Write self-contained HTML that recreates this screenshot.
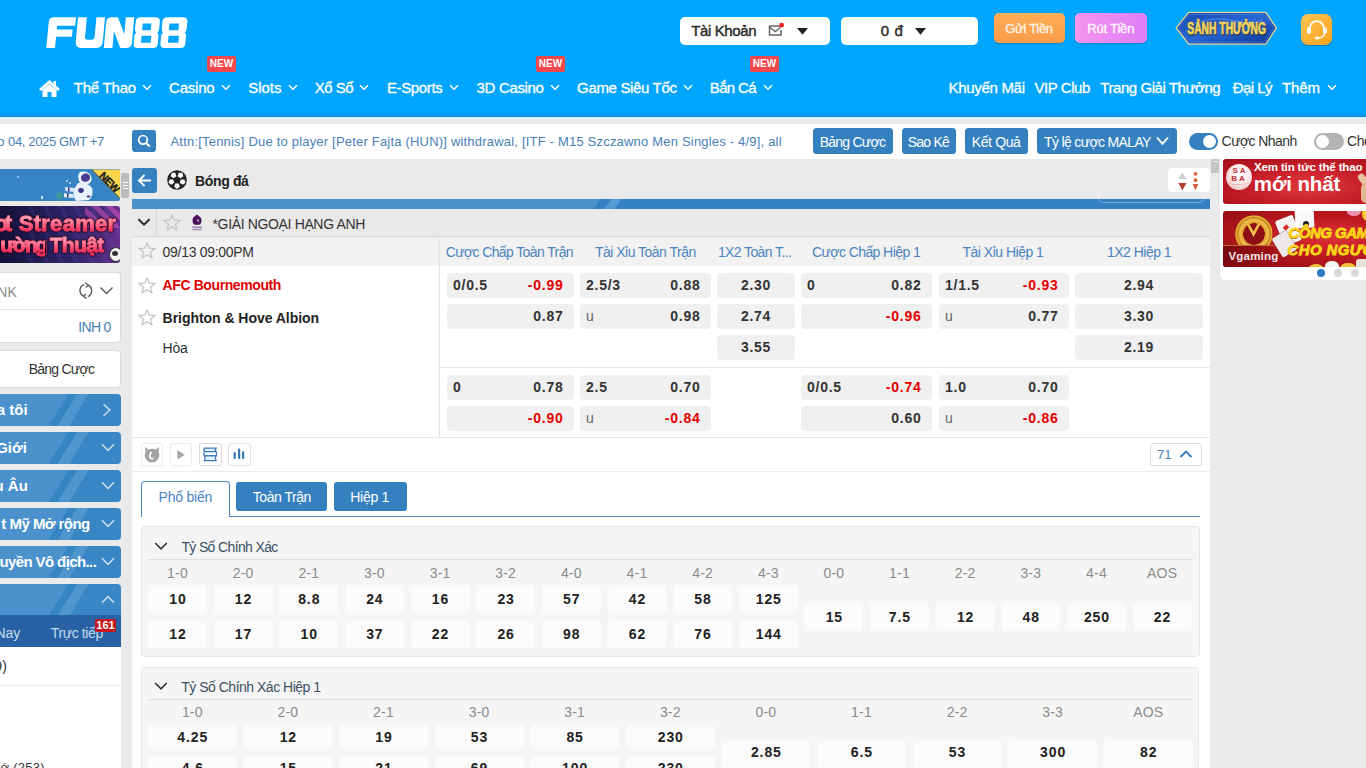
<!DOCTYPE html>
<html><head><meta charset="utf-8">
<style>
*{margin:0;padding:0;box-sizing:border-box}
html,body{width:1366px;height:768px;overflow:hidden;background:#eaeaea;font-family:"Liberation Sans",sans-serif;position:relative}
.a{position:absolute}
#hdr{left:0;top:0;width:1366px;height:117px;background:linear-gradient(#00a5fe 0,#00a5fe 112px,#1590e6 116px,#1a86d6 117px)}
#hdrline{left:0;top:117px;width:1366px;height:2px;background:linear-gradient(#c4f6ff,#e4ecf8)}
.nav{color:#fff;font-size:15px;top:79px;white-space:nowrap;line-height:17px;-webkit-text-stroke:0.3px #fff}
.chev{display:inline-block;width:7px;height:7px;border-right:1.6px solid #fff;border-bottom:1.6px solid #fff;transform:rotate(45deg);margin-left:7px;position:relative;top:-4px}
.new{background:#f2474b;color:#fff;font-size:10px;font-weight:bold;width:29px;height:15.5px;line-height:15.5px;text-align:center;border-radius:2px;top:56.3px}
.hbox{background:#fff;border-radius:5px;top:17px;height:28px}
.btn{border-radius:5px;color:#fff;font-size:13px;text-align:center;line-height:30px;top:13px;height:30px}
#tick{left:0;top:124px;width:1366px;height:35px;background:#fff}
.tb{background:#3581c0;border-radius:3.5px;top:128.3px;height:25.5px}
.sbi{position:absolute;left:0;width:121px;height:31.5px;background:linear-gradient(121.5deg,#4b92cd 0,#4b92cd 48.6%,#3585c3 48.6%,#3585c3 54.9%,#4f96cf 54.9%,#4f96cf 63%,#3886c4 63%)}
.sbt{position:absolute;left:-1px;top:7px;font-size:14px;font-weight:bold;color:#fff;white-space:nowrap}
.cell{position:absolute;background:#f0f0f0;border-radius:4px;height:25px;font-size:14px;font-weight:bold;color:#333;line-height:25px;letter-spacing:0.75px}
.cl{position:absolute;left:6px;top:0}
.cr{position:absolute;right:10.5px;top:0}
.cc{text-align:center}
.red{color:#e50000}
.ul{font-weight:normal;color:#666}
.th{position:absolute;top:244px;font-size:14px;color:#4b84bf;white-space:nowrap}
.lab{position:absolute;font-size:14px;color:#8c8c8c;text-align:center;width:59px;letter-spacing:0.2px}
.sc{position:absolute;background:#fbfbfb;border-radius:4px;font-size:14px;font-weight:bold;color:#222;text-align:center;width:59px;height:28px;line-height:28px;letter-spacing:0.9px;text-indent:0.9px}
</style></head><body>
<div id="hdr" class="a"></div>
<div id="hdrline" class="a"></div>
<!-- logo -->
<svg class="a" style="left:40px;top:10px" width="155" height="45" viewBox="0 0 1366 397"><g transform="translate(31,0) skewX(-5.3)" fill="#fff" fill-rule="evenodd">
<path d="M55,335 V110 Q55,65 100,65 H292 V140 H132 V172 H272 V235 H132 V335 Z"></path>
<path d="M310,65 H388 V238 Q388,262 412,262 H450 Q472,262 472,238 V65 H548 V280 Q548,335 493,335 H365 Q310,335 310,280 Z"></path>
<path d="M562,335 V108 Q562,65 605,65 H662 L732,212 V65 H806 V292 Q806,335 763,335 H708 L638,188 V335 Z"></path>
<path d="M862,65 H995 Q1035,65 1035,105 V168 Q1035,192 1021,200 Q1035,208 1035,232 V295 Q1035,335 995,335 H862 Q822,335 822,295 V232 Q822,208 836,200 Q822,192 822,168 V105 Q822,65 862,65 Z M886,120 V178 H962 V120 Z M886,228 V290 H972 V228 Z"></path>
<path d="M1098,65 H1238 Q1278,65 1278,105 V168 Q1278,192 1264,200 Q1278,208 1278,232 V295 Q1278,335 1238,335 H1098 Q1058,335 1058,295 V232 Q1058,208 1072,200 Q1058,192 1058,168 V105 Q1058,65 1098,65 Z M1122,120 V178 H1206 V120 Z M1124,228 V290 H1216 V228 Z"></path>
</g></svg>
<!-- nav -->
<svg class="a" style="left:38px;top:79px" width="23" height="18" viewBox="0 0 23 18"><path d="M11.5 1 L1 10 L3 12 L11.5 4.5 L20 12 L22 10 L18 6.6 V2 H15.5 V4.4 Z M4.5 11 V18 H9.5 V13 H13.5 V18 H18.5 V11 L11.5 5 Z" fill="#fff"></path></svg>
<div class="a nav fit" style="left: 73.8px; --tw: 62.3px; letter-spacing: -0.234px;">Thể Thao</div>
<svg class="a" style="left:142.0px;top:84px" width="10" height="7" viewBox="0 0 10 7"><path d="M1 1.2 L5 5.2 L9 1.2" fill="none" stroke="#fff" stroke-width="1.5"></path></svg>
<div class="a nav fit" style="left: 169.1px; --tw: 45.5px; letter-spacing: -0.241px;">Casino</div>
<svg class="a" style="left:221.1px;top:84px" width="10" height="7" viewBox="0 0 10 7"><path d="M1 1.2 L5 5.2 L9 1.2" fill="none" stroke="#fff" stroke-width="1.5"></path></svg>
<div class="a nav fit" style="left: 248.3px; --tw: 33.1px; letter-spacing: -0.065px;">Slots</div>
<svg class="a" style="left:287.9px;top:84px" width="10" height="7" viewBox="0 0 10 7"><path d="M1 1.2 L5 5.2 L9 1.2" fill="none" stroke="#fff" stroke-width="1.5"></path></svg>
<div class="a nav fit" style="left: 314.8px; --tw: 38.7px; letter-spacing: -0.544px;">Xổ Số</div>
<svg class="a" style="left:359.3px;top:84px" width="10" height="7" viewBox="0 0 10 7"><path d="M1 1.2 L5 5.2 L9 1.2" fill="none" stroke="#fff" stroke-width="1.5"></path></svg>
<div class="a nav fit" style="left: 386.9px; --tw: 55.9px; letter-spacing: -0.351px;">E-Sports</div>
<svg class="a" style="left:449.3px;top:84px" width="10" height="7" viewBox="0 0 10 7"><path d="M1 1.2 L5 5.2 L9 1.2" fill="none" stroke="#fff" stroke-width="1.5"></path></svg>
<div class="a nav fit" style="left: 476.6px; --tw: 67.3px; letter-spacing: -0.343px;">3D Casino</div>
<svg class="a" style="left:549.5px;top:84px" width="10" height="7" viewBox="0 0 10 7"><path d="M1 1.2 L5 5.2 L9 1.2" fill="none" stroke="#fff" stroke-width="1.5"></path></svg>
<div class="a nav fit" style="left: 577.1px; --tw: 99.8px; letter-spacing: -0.346px;">Game Siêu Tốc</div>
<svg class="a" style="left:682.5px;top:84px" width="10" height="7" viewBox="0 0 10 7"><path d="M1 1.2 L5 5.2 L9 1.2" fill="none" stroke="#fff" stroke-width="1.5"></path></svg>
<div class="a nav fit" style="left: 709.8px; --tw: 46.7px; letter-spacing: -0.669px;">Bắn Cá</div>
<svg class="a" style="left:763.0px;top:84px" width="10" height="7" viewBox="0 0 10 7"><path d="M1 1.2 L5 5.2 L9 1.2" fill="none" stroke="#fff" stroke-width="1.5"></path></svg>
<div class="a nav fit" style="left: 948.5px; --tw: 76.5px; letter-spacing: -0.302px;">Khuyến Mãi</div>
<div class="a nav fit" style="left: 1034.4px; --tw: 56.0px; letter-spacing: -0.42px;">VIP Club</div>
<div class="a nav fit" style="left: 1100.3px; --tw: 120.4px; letter-spacing: -0.44px;">Trang Giải Thưởng</div>
<div class="a nav fit" style="left: 1232.7px; --tw: 39.9px; letter-spacing: -0.526px;">Đại Lý</div>
<div class="a nav fit" style="left: 1282px; --tw: 38.0px; letter-spacing: -0.115px;">Thêm</div>
<svg class="a" style="left:1326.5px;top:84px" width="10" height="7" viewBox="0 0 10 7"><path d="M1 1.2 L5 5.2 L9 1.2" fill="none" stroke="#fff" stroke-width="1.5"></path></svg>
<div class="a new" style="left:207px">NEW</div>
<div class="a new" style="left:536px">NEW</div>
<div class="a new" style="left:750px">NEW</div>
<!-- header right -->
<div class="a hbox" style="left:680px;width:150px"></div>
<div class="a hbox" style="left:841px;width:137px"></div>
<div class="a btn" style="left:994px;width:71px;background:linear-gradient(#ffad55,#f99b4a);box-shadow:0 1px 1px rgba(0,0,0,.2)"></div>
<div class="a fit " style="left: 1005.2px; top: 21.4px; font-size: 13px; white-space: nowrap; -webkit-text-stroke: 0.35px rgb(255, 244, 232); --tw: 47.9px; color: rgb(255, 244, 232); letter-spacing: -0.284px;">Gửi Tiền</div>
<div class="a btn" style="left:1075px;width:72px;background:linear-gradient(90deg,#f593ef,#dd7ff5);box-shadow:0 1px 1px rgba(0,0,0,.2)"></div>
<div class="a fit " style="left: 1087.2px; top: 21.4px; font-size: 13px; white-space: nowrap; -webkit-text-stroke: 0.35px rgb(255, 244, 255); --tw: 47.2px; color: rgb(255, 244, 255); letter-spacing: -0.175px;">Rút Tiền</div>
<!-- ticker -->
<div id="tick" class="a"></div>

<!-- header right contents -->
<div class="a fit " style="left: 691.2px; top: 21.8px; font-size: 15px; -webkit-text-stroke: 0.45px rgb(45, 45, 45); white-space: nowrap; --tw: 65.4px; color: rgb(45, 45, 45); letter-spacing: -0.374px;">Tài Khoản</div>
<svg class="a" style="left:767px;top:22px" width="18" height="15" viewBox="0 0 18 15"><path d="M13 4 H2.5 V13 H14 V8" fill="none" stroke="#666" stroke-width="1.5"></path><path d="M2.5 5 L8.2 9.5 L13.5 5.5" fill="none" stroke="#666" stroke-width="1.4"></path><circle cx="14.6" cy="3.2" r="2.4" fill="#e8242b"></circle></svg>
<svg class="a" style="left:796.5px;top:27.5px" width="11" height="7" viewBox="0 0 11 7"><path d="M0 0 H11 L5.5 6.8 Z" fill="#222"></path></svg>
<div class="a fit " style="left: 880.7px; top: 21.8px; font-size: 15px; -webkit-text-stroke: 0.45px rgb(45, 45, 45); white-space: nowrap; --tw: 22.2px; color: rgb(45, 45, 45); letter-spacing: 0.67px;">0 đ</div>
<svg class="a" style="left:915px;top:27.5px" width="11" height="7" viewBox="0 0 11 7"><path d="M0 0 H11 L5.5 6.8 Z" fill="#222"></path></svg>
<!-- sanh thuong -->
<svg class="a" style="left:1175px;top:11px" width="103" height="35" viewBox="0 0 103 35">
<defs><linearGradient id="sg" x1="0" y1="0" x2="1" y2="1"><stop offset="0" stop-color="#1848b0"></stop><stop offset=".5" stop-color="#2766d6"></stop><stop offset="1" stop-color="#0e3290"></stop></linearGradient></defs>
<path d="M13.7 1.4 H90.8 L101.4 16.9 L90.8 33.1 H13.7 L1.2 16.9 Z" fill="url(#sg)" stroke="#e8d890" stroke-width="1.3"></path>
<path d="M15 3.5 H89.5 L98.5 16.9 L89.5 31 H15 L4 16.9 Z" fill="none" stroke="#3a6fcf" stroke-width="1"></path>
<path d="M20 12 Q40 5 60 10 T88 8" fill="none" stroke="#7ab0ff" stroke-width=".8" opacity=".7"></path>
<text transform="translate(52.3,23.6) scale(0.625,1)" text-anchor="middle" font-family="Liberation Sans" font-weight="bold" font-size="16.5" fill="#3a2a00" stroke="#3a2a00" stroke-width="1.6" opacity=".55">SẢNH THƯỞNG</text><text transform="translate(51.6,23.1) scale(0.625,1)" text-anchor="middle" font-family="Liberation Sans" font-weight="bold" font-size="16.5" fill="#f6d55e" stroke="#f6d55e" stroke-width="0.7">SẢNH THƯỞNG</text>
</svg>
<!-- support -->
<div class="a" style="left:1301.3px;top:13.6px;width:31.2px;height:31.7px;border-radius:7px;background:linear-gradient(135deg,#ffc555,#f9a21c);box-shadow:0 1px 1px rgba(0,0,0,.25)"></div>
<svg class="a" style="left:1304.9px;top:17px" width="24" height="25" viewBox="0 0 24 25"><path d="M4.6 12.8 V11.5 A7.2 7.4 0 0 1 19 11.5 V12.8" fill="none" stroke="#fff" stroke-width="1.8"></path><rect x="2" y="10.3" width="4" height="6.6" rx="2" fill="#fff"></rect><rect x="18" y="10.3" width="4" height="6.6" rx="2" fill="#fff"></rect><path d="M19.5 16.5 Q19 20.8 13 20.8" fill="none" stroke="#fff" stroke-width="1.4"></path><ellipse cx="12" cy="20.9" rx="2" ry="1.5" fill="#fff"></ellipse></svg>
<!-- ticker bar contents -->
<div class="a" style="right:1361.6px;top:133.9px;font-size:13px;white-space:nowrap;color:#4a80b8">o</div><div class="a fit " style="left: 8.1px; top: 133.9px; font-size: 13px; white-space: nowrap; --tw: 96.2px; color: rgb(74, 128, 184); letter-spacing: -0.364px;">04, 2025 GMT +7</div>
<div class="a" style="left:132px;top:130px;width:24px;height:22px;background:#3581c0;border-radius:3px"></div>
<svg class="a" style="left:136px;top:133px" width="16" height="16" viewBox="0 0 16 16"><circle cx="7" cy="6.8" r="4.3" fill="none" stroke="#fff" stroke-width="1.7"></circle><path d="M10.2 10 L13.2 13" stroke="#fff" stroke-width="1.9" stroke-linecap="round"></path></svg>
<div class="a fit " style="left: 170.5px; top: 133.7px; font-size: 13px; white-space: nowrap; --tw: 611.1px; color: rgb(74, 128, 184); letter-spacing: 0.197px;">Attn:[Tennis] Due to player [Peter Fajta (HUN)] withdrawal, [ITF - M15 Szczawno Men Singles - 4/9], all</div>
<div class="a tb" style="left:813px;width:80px"></div>
<div class="a fit " style="left: 819.7px; top: 134.3px; font-size: 14px; white-space: nowrap; --tw: 66.2px; color: rgb(255, 255, 255); letter-spacing: -0.756px;">Bảng Cược</div>
<div class="a tb" style="left:901.5px;width:54.5px"></div>
<div class="a fit " style="left: 907.7px; top: 134.3px; font-size: 14px; white-space: nowrap; --tw: 42.1px; color: rgb(255, 255, 255); letter-spacing: -0.767px;">Sao Kê</div>
<div class="a tb" style="left:965px;width:63px"></div>
<div class="a fit " style="left: 971.7px; top: 134.3px; font-size: 14px; white-space: nowrap; --tw: 49.2px; color: rgb(255, 255, 255); letter-spacing: -0.362px;">Kết Quả</div>
<div class="a tb" style="left:1037px;width:140px"></div>
<div class="a fit " style="left: 1044px; top: 134.3px; font-size: 14px; white-space: nowrap; --tw: 107.4px; color: rgb(255, 255, 255); letter-spacing: -0.646px;">Tỷ lệ cược MALAY</div>
<svg class="a" style="left:1156px;top:136px" width="13" height="10" viewBox="0 0 13 10"><path d="M1 1.5 L6.5 7.8 L12 1.5" fill="none" stroke="#fff" stroke-width="1.9"></path></svg>
<div class="a" style="left:1189px;top:133px;width:29px;height:17px;border-radius:9px;background:#3581c0"></div>
<div class="a" style="left:1203px;top:135px;width:13px;height:13px;border-radius:50%;background:#fff"></div>
<div class="a fit " style="left: 1221.6px; top: 133.2px; font-size: 14px; white-space: nowrap; --tw: 75.7px; color: rgb(51, 51, 51); letter-spacing: -0.568px;">Cược Nhanh</div>
<div class="a" style="left:1314px;top:133px;width:30px;height:17px;border-radius:9px;background:#b4b4b4"></div>
<div class="a" style="left:1316px;top:135px;width:13px;height:13px;border-radius:50%;background:#fff"></div>
<div class="a" style="left:1347px;top:133.2px;font-size:14px;white-space:nowrap;letter-spacing:-0.4px;color:#333">Chế</div>

<!-- ============ LEFT SIDEBAR ============ -->
<div class="a" style="left:0;top:169.4px;width:120.3px;height:31.8px;background:#3784c4;overflow:hidden;border-radius:0 2px 2px 0">
  <div class="a" style="left:91px;top:0;width:30px;height:32px;background:#fbd54a;clip-path:polygon(0 0,100% 0,100% 96%)"></div>
  <div class="a" style="left:91px;top:0;width:30px;height:32px;background:#2a4a6a;clip-path:polygon(0 0,4% 0,100% 92%,100% 96%)"></div>
  <div class="a" style="left:98px;top:6.5px;font-size:10.5px;font-weight:bold;color:#222;transform:rotate(46deg);letter-spacing:-0.3px;-webkit-text-stroke:0.4px #222">NEW</div>
  <svg class="a" style="left:64px;top:0" width="36" height="32" viewBox="0 0 36 32">
    <path d="M16 3 Q24 1 27 7 Q29 13 24 15 Q18 17 15 12 Q13 6 16 3Z" fill="#eef5fc"></path>
    <ellipse cx="21.5" cy="8.6" rx="4.6" ry="4.2" fill="#4a3a90" transform="rotate(-20 21.5 8.6)"></ellipse>
    <path d="M14 14 Q22 12 28 19 Q30 26 25 31 L12 32 Q8 26 10 20Z" fill="#e8f2fb"></path>
    <path d="M10 19 L1 18 L1.5 22 L11 23Z" fill="#dceaf7"></path><rect x="4" y="18.4" width="1.5" height="4" fill="#3a3070"></rect>
    <path d="M9 25 L-2 24 L-1.5 28 L10 29Z" fill="#dceaf7"></path><rect x="3" y="24.3" width="1.5" height="4.2" fill="#3a3070"></rect>
    <ellipse cx="17" cy="21.5" rx="2.8" ry="2.4" fill="#3f3488"></ellipse><ellipse cx="24.5" cy="27.5" rx="2" ry="1" fill="#3f3488"></ellipse>
  </svg>
  <div class="a" style="left:56px;top:23px;width:7px;height:7px;border-radius:50%;background:#3d9d8f;opacity:.8"></div>
  <div class="a" style="left:66px;top:11px;width:1.5px;height:1.5px;background:#9cc8ee"></div>
  <div class="a" style="left:69px;top:13px;width:1.5px;height:1.5px;background:#9cc8ee"></div>
  <div class="a" style="left:17px;top:7px;width:2px;height:2px;background:#8fc0ea"></div>
  <div class="a" style="left:41px;top:27px;width:2px;height:3px;background:#cfe3f5"></div>
</div>
<div class="a" style="left:121px;top:173px;width:8px;height:25px;background:#bcbcbc;border-radius:2px"></div>
<div class="a" style="left:122.5px;top:182px;width:5px;height:1px;background:#fff"></div>
<div class="a" style="left:122.5px;top:185px;width:5px;height:1px;background:#fff"></div>
<div class="a" style="left:122.5px;top:188px;width:5px;height:1px;background:#fff"></div>
<div class="a" style="left:0;top:206px;width:120.3px;height:56.7px;background:linear-gradient(90deg,#14123a 0,#221c55 35%,#2e2468 60%,#4a2a7a 85%,#6a3090 100%);overflow:hidden;border-radius:0 3px 3px 0">
  <div class="a" style="left:20px;top:0;width:100px;height:57px;background:repeating-linear-gradient(60deg,transparent 0 9px,rgba(120,90,220,.12) 9px 13px)"></div>
  <div class="a" style="left:85px;top:-8px;width:40px;height:30px;background:repeating-linear-gradient(45deg,rgba(230,90,200,.45) 0 5px,transparent 5px 10px)"></div>
  <div class="a" style="left:0;top:0;width:120px;height:57px;filter:drop-shadow(0 0 0.8px #1a0010) drop-shadow(0.6px 0.8px 0 #3a0418)">
  <div class="a" style="left:-5.5px;top:4.7px;font-size:22px;font-weight:bold;white-space:nowrap;--tw:7.5px;background:linear-gradient(#ffe8ee 0%,#ff7a95 45%,#f02c58 75%,#e01e48 100%);-webkit-background-clip:background-clip;background-clip:text;-webkit-background-clip:text;color:transparent;-webkit-text-stroke:0.9px rgba(255,80,120,.55);">o</div>
  <div class="a fit" style="left: 4.7px; top: 4.7px; font-size: 22px; font-weight: bold; white-space: nowrap; --tw: 111.4px; background: linear-gradient(rgb(255, 232, 238) 0%, rgb(255, 122, 149) 45%, rgb(240, 44, 88) 75%, rgb(224, 30, 72) 100%) text; color: transparent; -webkit-text-stroke: 0.9px rgba(255, 80, 120, 0.55); letter-spacing: 0.284px;">t Streamer</div>
  <div class="a fit" style="left: 0.2px; top: 27.1px; font-size: 21px; font-weight: bold; white-space: nowrap; --tw: 47.8px; background: linear-gradient(rgb(255, 232, 238) 0%, rgb(255, 122, 149) 45%, rgb(240, 44, 88) 75%, rgb(224, 30, 72) 100%) text; color: transparent; -webkit-text-stroke: 0.9px rgba(255, 80, 120, 0.55); letter-spacing: -2.666px;">ường</div>
  <div class="a fit" style="left: 49.5px; top: 27.1px; font-size: 21px; font-weight: bold; white-space: nowrap; --tw: 54.7px; background: linear-gradient(rgb(255, 232, 238) 0%, rgb(255, 122, 149) 45%, rgb(240, 44, 88) 75%, rgb(224, 30, 72) 100%) text; color: transparent; -webkit-text-stroke: 0.9px rgba(255, 80, 120, 0.55); letter-spacing: -0.614px;">Thuật</div>
  </div>
  <div class="a" style="left:109px;top:41px;width:14px;height:15px;border-radius:50%;background:#f4f4f4;border:1.5px solid #333"></div>
  <div class="a" style="left:112px;top:45px;width:6px;height:5px;border-radius:50%;background:#333"></div>
</div>
<div class="a" style="left:0;top:271.5px;width:121px;height:71px;background:#fff;border-radius:0 4px 4px 0;border:1px solid #dcdcdc;border-left:none"></div>
<div class="a" style="left:0;top:309px;width:121px;height:1px;background:#e4e4e4"></div>
<div class="a" style="right:1349.2px;top:284.3px;font-size:14px;white-space:nowrap;color:#8a8a8a">NK</div>
<svg class="a" style="left:76px;top:281px" width="40" height="20" viewBox="0 0 40 20"><path d="M8.2 3.6 A6.2 6.2 0 0 0 7.8 15.2" fill="none" stroke="#555" stroke-width="1.4"></path><path d="M12 4.2 A6.2 6.2 0 0 1 11.8 15.6" fill="none" stroke="#555" stroke-width="1.4"></path><path d="M9.2 1.8 L12.3 4.2 L9.8 6.6" fill="none" stroke="#555" stroke-width="1.3"></path><path d="M10.5 17.6 L7.6 15.4 L9.8 13" fill="none" stroke="#555" stroke-width="1.3"></path><path d="M24.5 6.5 L30.5 12.5 L36.5 6.5" fill="none" stroke="#555" stroke-width="1.4"></path></svg>
<div class="a fit " style="left: 78.2px; top: 318.8px; font-size: 14px; white-space: nowrap; --tw: 33.2px; color: rgb(74, 128, 184); letter-spacing: -0.649px;">INH 0</div>
<div class="a" style="left:0;top:350px;width:121px;height:37.5px;background:#fff;border-radius:0 4px 4px 0;border:1px solid #dcdcdc;border-left:none"></div>
<div class="a fit " style="left: 28.7px; top: 360.8px; font-size: 14px; white-space: nowrap; --tw: 66.2px; color: rgb(51, 51, 51); letter-spacing: -0.756px;">Bảng Cược</div>
<div class="a sbi" style="top:394px;border-radius:0 4px 4px 0"></div>
<div class="a" style="right:1338.3px;top:401.1px;font-size:15px;font-weight:bold;white-space:nowrap;color:#fff">a tôi</div>
<svg class="a" style="left:102px;top:403px" width="10" height="14" viewBox="0 0 10 14"><path d="M1.5 1.2 L7.8 7 L1.5 12.8" fill="none" stroke="#cfe2f4" stroke-width="1.5"></path></svg>
<div class="a sbi" style="top:432px;border-radius:0 4px 4px 0"></div>
<div class="a" style="right:1339.2px;top:439.1px;font-size:15px;font-weight:bold;white-space:nowrap;color:#fff">Giới</div>
<svg class="a" style="left:101px;top:443px" width="14" height="9" viewBox="0 0 14 9"><path d="M1 1.2 L7 7.5 L13 1.2" fill="none" stroke="#cfe2f4" stroke-width="1.5"></path></svg>
<div class="a sbi" style="top:470px;border-radius:0 4px 4px 0"></div>
<div class="a" style="right:1338.2px;top:477.1px;font-size:15px;font-weight:bold;white-space:nowrap;color:#fff">u Âu</div>
<svg class="a" style="left:101px;top:481px" width="14" height="9" viewBox="0 0 14 9"><path d="M1 1.2 L7 7.5 L13 1.2" fill="none" stroke="#cfe2f4" stroke-width="1.5"></path></svg>
<div class="a sbi" style="top:508px;border-radius:0 4px 4px 0"></div>
<div class="a" style="right:1359.7px;top:515.4px;font-size:15px;font-weight:bold;white-space:nowrap;color:#fff">t</div><div class="a fit " style="left: 9.6px; top: 515.4px; font-size: 15px; font-weight: bold; white-space: nowrap; --tw: 80.6px; color: rgb(255, 255, 255); letter-spacing: -0.564px;">Mỹ Mở rộng</div>
<svg class="a" style="left:101px;top:519px" width="14" height="9" viewBox="0 0 14 9"><path d="M1 1.2 L7 7.5 L13 1.2" fill="none" stroke="#cfe2f4" stroke-width="1.5"></path></svg>
<div class="a sbi" style="top:546px;border-radius:0 4px 4px 0"></div>
<div class="a fit " style="left: -0.5px; top: 552.8px; font-size: 15px; font-weight: bold; white-space: nowrap; --tw: 97.3px; color: rgb(255, 255, 255); letter-spacing: -0.611px;">uyền Vô địch...</div>
<svg class="a" style="left:101px;top:557px" width="14" height="9" viewBox="0 0 14 9"><path d="M1 1.2 L7 7.5 L13 1.2" fill="none" stroke="#cfe2f4" stroke-width="1.5"></path></svg>
<div class="a sbi" style="top:584px;border-radius:0 4px 0 0"></div>
<svg class="a" style="left:101px;top:595px" width="14" height="9" viewBox="0 0 14 9"><path d="M1 7.8 L7 1.5 L13 7.8" fill="none" stroke="#cfe2f4" stroke-width="1.5"></path></svg>
<div class="a" style="left:0;top:615px;width:121px;height:32px;background:#2862a5"></div>
<div class="a" style="right:1345.7px;top:624.5px;font-size:14px;white-space:nowrap;color:#c8dbee">Nay</div>
<div class="a fit " style="left: 50.8px; top: 624.5px; font-size: 14px; white-space: nowrap; --tw: 52.5px; color: rgb(200, 219, 238); letter-spacing: -0.379px;">Trực tiếp</div>
<div class="a" style="left:95px;top:618.5px;width:21px;height:13px;background:#c8161e;color:#fff;font-size:11px;font-weight:bold;line-height:13px;text-align:center;border-radius:2px">161</div>
<div class="a" style="left:0;top:647px;width:121px;height:121px;background:#fff"></div>
<div class="a" style="left:0;top:685px;width:121px;height:1px;background:#ececec"></div>
<div class="a" style="right:1359.2px;top:657.9px;font-size:14px;white-space:nowrap;color:#333">9)</div>
<div class="a" style="right:1321px;top:760.2px;font-size:13px;white-space:nowrap;color:#333;letter-spacing:0.3px">ớ  (253)</div>

<!-- ============ MAIN ============ -->
<div class="a" style="left:132px;top:168px;width:25px;height:25px;background:#3581c0;border-radius:3px"></div>
<svg class="a" style="left:136px;top:172px" width="17" height="17" viewBox="0 0 17 17"><path d="M15 8.5 H3 M8.5 3 L3 8.5 L8.5 14" fill="none" stroke="#fff" stroke-width="1.9"></path></svg>
<svg class="a" style="left:167.3px;top:169.8px" width="20" height="20" viewBox="0 0 20 20"><circle cx="10" cy="10" r="9.8" fill="#222"></circle><path d="M4.77,2.80 L8.30,2.80 L9.39,6.15 L6.53,8.23 L3.68,6.15ZM15.23,2.80 L16.32,6.15 L13.47,8.23 L10.61,6.15 L11.70,2.80ZM18.46,12.75 L15.61,14.82 L12.76,12.75 L13.85,9.40 L17.37,9.40ZM10.00,18.90 L7.15,16.83 L8.24,13.47 L11.76,13.47 L12.85,16.83ZM1.54,12.75 L2.63,9.40 L6.15,9.40 L7.24,12.75 L4.39,14.82Z" fill="#fff"></path></svg>
<div class="a fit " style="left: 195px; top: 173.3px; font-size: 14px; font-weight: bold; white-space: nowrap; --tw: 53.9px; color: rgb(34, 34, 34); letter-spacing: -0.35px;">Bóng đá</div>
<div class="a" style="left:1168px;top:168px;width:42px;height:24px;background:#fff;border-radius:4px"></div>
<svg class="a" style="left:1176px;top:171px" width="24" height="21" viewBox="0 0 24 21"><path d="M2.3 8 L6.4 1.5 L10.5 8Z" fill="#cfcfcf"></path><path d="M2.3 12 L6.4 19.3 L10.5 12Z" fill="#b8402e"></path><circle cx="19.5" cy="2.8" r="1.9" fill="#d9603f"></circle><circle cx="19.5" cy="9.2" r="1.9" fill="#d9603f"></circle><path d="M16.6 13 H22.4 L19.5 19.2Z" fill="#d9603f"></path></svg>

<div class="a" style="left:132px;top:198px;width:1078px;height:1px;background:#dde9f4"></div><div class="a" style="left:132px;top:199px;width:1078px;height:10px;background:#4b91cc;overflow:hidden"><div class="a" style="left:465px;top:0;width:700px;height:10px;background:#3381c1;transform:skewX(-35deg)"></div><div class="a" style="left:475.5px;top:0;width:10px;height:10px;background:#559ad2;transform:skewX(-35deg)"></div></div><div class="a" style="left:1098px;top:194px;width:106px;height:8.5px;border:1px solid rgba(255,255,255,.35);border-top:none;border-radius:0 0 5px 5px"></div>
<!-- league row -->
<div class="a" style="left:132px;top:209px;width:1078px;height:28px;background:#e9e9e9;border-bottom:1px solid #dcdcdc"></div>
<div class="a" style="left:156px;top:209px;width:1px;height:28px;background:#d6d6d6"></div>
<svg class="a" style="left:137px;top:216px" width="14" height="12" viewBox="0 0 14 12"><path d="M1.5 3.2 L7 8.6 L12.5 3.2" fill="none" stroke="#2a2a2a" stroke-width="2"></path></svg>
<svg class="a" style="left:163px;top:214px" width="18" height="17" viewBox="0 0 18 17"><path d="M9 1 L11.2 6.2 L16.8 6.6 L12.5 10.2 L13.9 15.8 L9 12.8 L4.1 15.8 L5.5 10.2 L1.2 6.6 L6.8 6.2 Z" fill="none" stroke="#c4c4c4" stroke-width="1.2"></path></svg>
<svg class="a" style="left:191px;top:214px" width="12" height="18" viewBox="0 0 12 18"><path d="M5.5 0.8 Q7 0.5 7.5 2 Q10.5 3 10.5 6.5 Q10.8 9.5 8.5 10.8 L3.5 10.8 Q1.2 9 1.5 6 Q2 2.5 4.5 2 Q4.6 1 5.5 0.8Z" fill="#4a0f5a"></path><path d="M6 5 Q8.5 5.5 8.2 7.5 L6.5 7.2Z" fill="#e8d8ef"></path><rect x="1.2" y="12.5" width="9.6" height="1.4" fill="#9a7aa8"></rect><rect x="1.2" y="14.8" width="9.6" height="1.4" fill="#a58ab2"></rect></svg>
<div class="a fit " style="left: 212.5px; top: 215.8px; font-size: 14px; white-space: nowrap; --tw: 152.8px; color: rgb(51, 51, 51); letter-spacing: -0.352px;">*GIẢI NGOẠI HẠNG ANH</div>
<!-- header row -->
<div class="a" style="left:132px;top:238px;width:1078px;height:28px;background:#f2f2f2"></div>
<svg class="a" style="left:138px;top:242px" width="18" height="17" viewBox="0 0 18 17"><path d="M9 1 L11.2 6.2 L16.8 6.6 L12.5 10.2 L13.9 15.8 L9 12.8 L4.1 15.8 L5.5 10.2 L1.2 6.6 L6.8 6.2 Z" fill="none" stroke="#c4c4c4" stroke-width="1.2"></path></svg>
<div class="a fit " style="left: 162.6px; top: 243.8px; font-size: 14px; white-space: nowrap; --tw: 91.4px; color: rgb(51, 51, 51); letter-spacing: -0.297px;">09/13 09:00PM</div>
<div class="a fit " style="left: 445.7px; top: 244.3px; font-size: 14px; white-space: nowrap; --tw: 127.9px; color: rgb(75, 132, 191); letter-spacing: -0.612px;">Cược Chấp Toàn Trận</div>
<div class="a fit " style="left: 595px; top: 244.3px; font-size: 14px; white-space: nowrap; --tw: 101.2px; color: rgb(75, 132, 191); letter-spacing: -0.518px;">Tài Xỉu Toàn Trận</div>
<div class="a fit " style="left: 717.9px; top: 244.3px; font-size: 14px; white-space: nowrap; --tw: 74.0px; color: rgb(75, 132, 191); letter-spacing: -0.602px;">1X2 Toàn T...</div>
<div class="a fit " style="left: 812px; top: 244.3px; font-size: 14px; white-space: nowrap; --tw: 108.7px; color: rgb(75, 132, 191); letter-spacing: -0.579px;">Cược Chấp Hiệp 1</div>
<div class="a fit " style="left: 962.5px; top: 244.3px; font-size: 14px; white-space: nowrap; --tw: 81.4px; color: rgb(75, 132, 191); letter-spacing: -0.503px;">Tài Xỉu Hiệp 1</div>
<div class="a fit " style="left: 1107px; top: 244.3px; font-size: 14px; white-space: nowrap; --tw: 64.6px; color: rgb(75, 132, 191); letter-spacing: -0.52px;">1X2 Hiệp 1</div>
<div class="a" style="left:132px;top:266px;width:1078px;height:171px;background:#fff"></div>
<div class="a" style="left:439px;top:238px;width:1px;height:199px;background:#e4e4e4"></div>
<div class="a" style="left:439px;top:367px;width:771px;height:1px;background:#e8e8e8"></div>
<div class="a" style="left:132px;top:437px;width:1078px;height:331px;background:#fff"></div>
<div class="a" style="left:132px;top:437px;width:1078px;height:1px;background:#e8e8e8"></div>
<div class="a" style="left:132px;top:471px;width:1078px;height:1px;background:#ececec"></div>
<svg class="a" style="left:138px;top:277px" width="18" height="17" viewBox="0 0 18 17"><path d="M9 1 L11.2 6.2 L16.8 6.6 L12.5 10.2 L13.9 15.8 L9 12.8 L4.1 15.8 L5.5 10.2 L1.2 6.6 L6.8 6.2 Z" fill="none" stroke="#c4c4c4" stroke-width="1.2"></path></svg>
<div class="a fit " style="left: 162.6px; top: 276.9px; font-size: 14px; font-weight: bold; white-space: nowrap; --tw: 118.8px; color: rgb(224, 0, 0); letter-spacing: -0.403px;">AFC Bournemouth</div>
<svg class="a" style="left:138px;top:309px" width="18" height="17" viewBox="0 0 18 17"><path d="M9 1 L11.2 6.2 L16.8 6.6 L12.5 10.2 L13.9 15.8 L9 12.8 L4.1 15.8 L5.5 10.2 L1.2 6.6 L6.8 6.2 Z" fill="none" stroke="#c4c4c4" stroke-width="1.2"></path></svg>
<div class="a fit " style="left: 162.6px; top: 309.5px; font-size: 14px; font-weight: bold; white-space: nowrap; --tw: 156.5px; color: rgb(34, 34, 34); letter-spacing: -0.041px;">Brighton &amp; Hove Albion</div>
<div class="a fit " style="left: 162.6px; top: 340.3px; font-size: 14px; white-space: nowrap; --tw: 25.2px; color: rgb(51, 51, 51); letter-spacing: -0.244px;">Hòa</div>
<div class="cell" style="left:447px;top:273px;width:127px"><span class="cl">0/0.5</span><span class="cr red">-0.99</span></div>
<div class="cell" style="left:447px;top:304px;width:127px"><span class="cl"></span><span class="cr">0.87</span></div>
<div class="cell" style="left:447px;top:375px;width:127px"><span class="cl">0</span><span class="cr">0.78</span></div>
<div class="cell" style="left:447px;top:406px;width:127px"><span class="cl"></span><span class="cr red">-0.90</span></div>
<div class="cell" style="left:580px;top:273px;width:131px"><span class="cl">2.5/3</span><span class="cr">0.88</span></div>
<div class="cell" style="left:580px;top:304px;width:131px"><span class="cl ul">u</span><span class="cr">0.98</span></div>
<div class="cell" style="left:580px;top:375px;width:131px"><span class="cl">2.5</span><span class="cr">0.70</span></div>
<div class="cell" style="left:580px;top:406px;width:131px"><span class="cl ul">u</span><span class="cr red">-0.84</span></div>
<div class="cell cc" style="left:717px;top:273px;width:78px">2.30</div>
<div class="cell cc" style="left:717px;top:304px;width:78px">2.74</div>
<div class="cell cc" style="left:717px;top:335px;width:78px">3.55</div>
<div class="cell" style="left:801px;top:273px;width:131px"><span class="cl">0</span><span class="cr">0.82</span></div>
<div class="cell" style="left:801px;top:304px;width:131px"><span class="cl"></span><span class="cr red">-0.96</span></div>
<div class="cell" style="left:801px;top:375px;width:131px"><span class="cl">0/0.5</span><span class="cr red">-0.74</span></div>
<div class="cell" style="left:801px;top:406px;width:131px"><span class="cl"></span><span class="cr">0.60</span></div>
<div class="cell" style="left:939px;top:273px;width:130px"><span class="cl">1/1.5</span><span class="cr red">-0.93</span></div>
<div class="cell" style="left:939px;top:304px;width:130px"><span class="cl ul">u</span><span class="cr">0.77</span></div>
<div class="cell" style="left:939px;top:375px;width:130px"><span class="cl">1.0</span><span class="cr">0.70</span></div>
<div class="cell" style="left:939px;top:406px;width:130px"><span class="cl ul">u</span><span class="cr red">-0.86</span></div>
<div class="cell cc" style="left:1075px;top:273px;width:128px">2.94</div>
<div class="cell cc" style="left:1075px;top:304px;width:128px">3.30</div>
<div class="cell cc" style="left:1075px;top:335px;width:128px">2.19</div>

<!-- icon row -->
<div class="a" style="left:140.5px;top:443px;width:22px;height:23px;border:1px solid #ebebeb;border-radius:3px;background:#fff"></div>
<svg class="a" style="left:143px;top:446px" width="18" height="17" viewBox="0 0 18 17"><path d="M2 1 L5.5 3.5 Q9 2.2 12.5 3.5 L16 1 L15.5 6 Q17.5 10 14.5 14 Q12.5 16.5 9 16.5 Q5.5 16.5 3.5 14 Q0.5 10 2.5 6 Z" fill="#a3a3a3"></path><path d="M8.5 6 Q6 9 7 11.5 Q8 13 10.5 12.5" fill="none" stroke="#fff" stroke-width="1.7"></path></svg>
<div class="a" style="left:169.5px;top:443px;width:22px;height:23px;border:1px solid #ebebeb;border-radius:3px;background:#fff"></div>
<svg class="a" style="left:176.5px;top:449.5px" width="8" height="9.5" viewBox="0 0 8 9.5"><path d="M0.3 0 L7.8 4.75 L0.3 9.5Z" fill="#a6a6a6"></path></svg>
<div class="a" style="left:198.5px;top:443px;width:23px;height:23px;border:1px solid #d9d9d9;border-radius:3px;background:#fff"></div>
<svg class="a" style="left:202px;top:446.5px" width="16" height="15" viewBox="0 0 16 15"><path d="M2.5 1.2 H14 Q12.6 2.8 14 4.6 H2.5 Q1.2 2.8 2.5 1.2 Z" fill="#dff2ff" stroke="#3f78b5" stroke-width="1.3"></path><path d="M2.5 4.6 H14 Q15.2 6.6 14 8.6 H2.5 Q1 6.6 2.5 4.6Z" fill="#fff" stroke="#3f78b5" stroke-width="1.1"></path><path d="M2.5 8.8 H14 Q12.8 10.8 14 13.6 H2.5 Q3.8 11 2.5 8.8 Z" fill="#dff2ff" stroke="#3f78b5" stroke-width="1.3"></path></svg>
<div class="a" style="left:227.5px;top:443px;width:23px;height:23px;border:1px solid #e2e2e2;border-radius:3px;background:#fff"></div>
<svg class="a" style="left:232px;top:447px" width="14" height="14" viewBox="0 0 14 14"><rect x="1.6" y="5" width="2.2" height="7" rx=".8" fill="#3a7ab8"></rect><rect x="6" y="1.5" width="2.2" height="10.5" rx=".8" fill="#3a7ab8"></rect><rect x="10" y="4.2" width="2.2" height="7.8" rx=".8" fill="#3a7ab8"></rect></svg>
<div class="a" style="left:1150px;top:443px;width:52px;height:23px;border:1px solid #ddd;border-radius:3px;background:#fff"></div>
<div class="a" style="left:1157px;top:447px;font-size:13px;color:#4b84bf">71</div>
<svg class="a" style="left:1179px;top:449px" width="14" height="10" viewBox="0 0 14 10"><path d="M1.5 8 L7 2.5 L12.5 8" fill="none" stroke="#3a78b8" stroke-width="1.8"></path></svg>
<!-- tabs -->
<div class="a" style="left:141px;top:516px;width:1059px;height:1px;background:#4b86bf"></div>
<div class="a" style="left:141px;top:481px;width:89px;height:36px;background:#fff;border:1px solid #4b86bf;border-bottom:none;border-radius:4px 4px 0 0"></div>
<div class="a fit " style="left: 158.5px; top: 489px; font-size: 14px; white-space: nowrap; --tw: 53.9px; color: rgb(75, 132, 191); letter-spacing: -0.197px;">Phổ biến</div>
<div class="a" style="left:236px;top:482px;width:91px;height:29px;background:#3581c0;border-radius:3px"></div>
<div class="a fit " style="left: 252.8px; top: 488.5px; font-size: 14px; white-space: nowrap; --tw: 58.6px; color: rgb(255, 255, 255); letter-spacing: -0.458px;">Toàn Trận</div>
<div class="a" style="left:334px;top:482px;width:73px;height:29px;background:#3581c0;border-radius:3px"></div>
<div class="a fit " style="left: 350.2px; top: 488.5px; font-size: 14px; white-space: nowrap; --tw: 39.2px; color: rgb(255, 255, 255); letter-spacing: -0.254px;">Hiệp 1</div>
<!-- score panel 1 -->
<div class="a" style="left:141px;top:526px;width:1059px;height:131px;background:#f5f5f5;border:1px solid #e6e6e6;border-radius:4px"></div>
<svg class="a" style="left:154px;top:541px" width="14" height="10" viewBox="0 0 14 10"><path d="M1.2 2 L7 7.8 L12.8 2" fill="none" stroke="#333" stroke-width="1.6"></path></svg>
<div class="a fit " style="left: 181.4px; top: 538.8px; font-size: 14px; white-space: nowrap; --tw: 96.9px; color: rgb(60, 80, 100); letter-spacing: -0.638px;">Tỷ Số Chính Xác</div>
<div class="a" style="left:148px;top:559px;width:1045px;height:1px;background:#e0e0e0"></div>
<div class="lab" style="left:148.0px;top:564.5px">1-0</div>
<div class="sc" style="left:148.0px;top:585px">10</div>
<div class="sc" style="left:148.0px;top:620px">12</div>
<div class="lab" style="left:213.6px;top:564.5px">2-0</div>
<div class="sc" style="left:213.6px;top:585px">12</div>
<div class="sc" style="left:213.6px;top:620px">17</div>
<div class="lab" style="left:279.3px;top:564.5px">2-1</div>
<div class="sc" style="left:279.3px;top:585px">8.8</div>
<div class="sc" style="left:279.3px;top:620px">10</div>
<div class="lab" style="left:344.9px;top:564.5px">3-0</div>
<div class="sc" style="left:344.9px;top:585px">24</div>
<div class="sc" style="left:344.9px;top:620px">37</div>
<div class="lab" style="left:410.6px;top:564.5px">3-1</div>
<div class="sc" style="left:410.6px;top:585px">16</div>
<div class="sc" style="left:410.6px;top:620px">22</div>
<div class="lab" style="left:476.2px;top:564.5px">3-2</div>
<div class="sc" style="left:476.2px;top:585px">23</div>
<div class="sc" style="left:476.2px;top:620px">26</div>
<div class="lab" style="left:541.8px;top:564.5px">4-0</div>
<div class="sc" style="left:541.8px;top:585px">57</div>
<div class="sc" style="left:541.8px;top:620px">98</div>
<div class="lab" style="left:607.5px;top:564.5px">4-1</div>
<div class="sc" style="left:607.5px;top:585px">42</div>
<div class="sc" style="left:607.5px;top:620px">62</div>
<div class="lab" style="left:673.1px;top:564.5px">4-2</div>
<div class="sc" style="left:673.1px;top:585px">58</div>
<div class="sc" style="left:673.1px;top:620px">76</div>
<div class="lab" style="left:738.8px;top:564.5px">4-3</div>
<div class="sc" style="left:738.8px;top:585px">125</div>
<div class="sc" style="left:738.8px;top:620px">144</div>
<div class="lab" style="left:804.4px;top:564.5px">0-0</div>
<div class="sc" style="left:804.4px;top:602.5px">15</div>
<div class="lab" style="left:870.0px;top:564.5px">1-1</div>
<div class="sc" style="left:870.0px;top:602.5px">7.5</div>
<div class="lab" style="left:935.7px;top:564.5px">2-2</div>
<div class="sc" style="left:935.7px;top:602.5px">12</div>
<div class="lab" style="left:1001.3px;top:564.5px">3-3</div>
<div class="sc" style="left:1001.3px;top:602.5px">48</div>
<div class="lab" style="left:1067.0px;top:564.5px">4-4</div>
<div class="sc" style="left:1067.0px;top:602.5px">250</div>
<div class="lab" style="left:1132.6px;top:564.5px">AOS</div>
<div class="sc" style="left:1132.6px;top:602.5px">22</div>
<!-- score panel 2 -->
<div class="a" style="left:141px;top:667px;width:1058px;height:130px;background:#f5f5f5;border:1px solid #e6e6e6;border-radius:4px"></div>
<svg class="a" style="left:154px;top:681px" width="14" height="10" viewBox="0 0 14 10"><path d="M1.2 2 L7 7.8 L12.8 2" fill="none" stroke="#333" stroke-width="1.6"></path></svg>
<div class="a fit " style="left: 181.3px; top: 679px; font-size: 14px; white-space: nowrap; --tw: 139.7px; color: rgb(60, 80, 100); letter-spacing: -0.499px;">Tỷ Số Chính Xác Hiệp 1</div>
<div class="a" style="left:148px;top:699px;width:1045px;height:1px;background:#e0e0e0"></div>
<div class="lab" style="left:147.8px;top:704px;width:89px">1-0</div>
<div class="sc" style="left:147.8px;top:724.5px;width:89px;height:24px;line-height:24px">4.25</div>
<div class="sc" style="left:147.8px;top:755.5px;width:89px;height:24px;line-height:24px">4.6</div>
<div class="lab" style="left:243.4px;top:704px;width:89px">2-0</div>
<div class="sc" style="left:243.4px;top:724.5px;width:89px;height:24px;line-height:24px">12</div>
<div class="sc" style="left:243.4px;top:755.5px;width:89px;height:24px;line-height:24px">15</div>
<div class="lab" style="left:339.0px;top:704px;width:89px">2-1</div>
<div class="sc" style="left:339.0px;top:724.5px;width:89px;height:24px;line-height:24px">19</div>
<div class="sc" style="left:339.0px;top:755.5px;width:89px;height:24px;line-height:24px">21</div>
<div class="lab" style="left:434.6px;top:704px;width:89px">3-0</div>
<div class="sc" style="left:434.6px;top:724.5px;width:89px;height:24px;line-height:24px">53</div>
<div class="sc" style="left:434.6px;top:755.5px;width:89px;height:24px;line-height:24px">69</div>
<div class="lab" style="left:530.2px;top:704px;width:89px">3-1</div>
<div class="sc" style="left:530.2px;top:724.5px;width:89px;height:24px;line-height:24px">85</div>
<div class="sc" style="left:530.2px;top:755.5px;width:89px;height:24px;line-height:24px">100</div>
<div class="lab" style="left:625.8px;top:704px;width:89px">3-2</div>
<div class="sc" style="left:625.8px;top:724.5px;width:89px;height:24px;line-height:24px">230</div>
<div class="sc" style="left:625.8px;top:755.5px;width:89px;height:24px;line-height:24px">230</div>
<div class="lab" style="left:721.4px;top:704px;width:89px">0-0</div>
<div class="sc" style="left:721.4px;top:740px;width:89px;height:28px;line-height:24px">2.85</div>
<div class="lab" style="left:817.0px;top:704px;width:89px">1-1</div>
<div class="sc" style="left:817.0px;top:740px;width:89px;height:28px;line-height:24px">6.5</div>
<div class="lab" style="left:912.6px;top:704px;width:89px">2-2</div>
<div class="sc" style="left:912.6px;top:740px;width:89px;height:28px;line-height:24px">53</div>
<div class="lab" style="left:1008.2px;top:704px;width:89px">3-3</div>
<div class="sc" style="left:1008.2px;top:740px;width:89px;height:28px;line-height:24px">300</div>
<div class="lab" style="left:1103.8px;top:704px;width:89px">AOS</div>
<div class="sc" style="left:1103.8px;top:740px;width:89px;height:28px;line-height:24px">82</div>
<!-- scrollbar -->
<div class="a" style="left:1211px;top:159px;width:8px;height:14px;background:#c4c4c4;border-radius:1px"></div>
<div class="a" style="left:1212.5px;top:161px;width:5px;height:1px;background:#eee"></div>
<!-- right banners -->
<div class="a" style="left:1220px;top:158px;width:150px;height:121.5px;background:#fff;border-radius:4px;box-shadow:0 0 1px rgba(0,0,0,.15)"></div>
<div class="a" style="left:1223px;top:159.2px;width:145px;height:45px;background:radial-gradient(ellipse at 60% 60%,#e03a3f 0,#c8202a 45%,#a50f19 100%);border-radius:3px;overflow:hidden">
  <div class="a" style="left:2.5px;top:4.5px;width:26.5px;height:26.5px;border-radius:50%;background:radial-gradient(circle at 55% 40%,#fff 0,#fbeaea 45%,#f0c8c8 70%,rgba(255,255,255,.85) 72%,#f6dede 100%)"></div>
  <div class="a" style="left:7px;top:8px;font-size:8px;font-weight:bold;color:#c4303a;line-height:8px;width:18px;text-align:center;letter-spacing:2px;text-indent:2px">SA<br>BA</div>
  <div class="a" style="left:4px;top:20px;width:22px;height:6px;border-radius:50%;border-bottom:1.5px solid #e8b0b0"></div>
  <div class="a fit" style="left: 31px; top: 1.8px; font-size: 11.5px; font-weight: bold; color: rgb(255, 255, 255); white-space: nowrap; --tw: 108.5px; letter-spacing: -0.142px;">Xem tin tức thể thao</div>
  <div class="a fit" style="left: 30.8px; top: 13px; font-size: 20.5px; font-weight: bold; color: rgb(255, 255, 255); white-space: nowrap; --tw: 86.5px; letter-spacing: -0.138px;">mới nhất</div>
  <div class="a" style="left:137px;top:14px;width:7px;height:14px;background:#e8c4a0;border-radius:4px;transform:rotate(-35deg)"></div><div class="a" style="left:138px;top:24px;width:10px;height:20px;background:#e2b890;border-radius:5px 0 0 5px"></div>
</div>
<div class="a" style="left:1223px;top:211px;width:145px;height:56px;background:radial-gradient(ellipse at 75% 45%,#e0343a 0,#c01a22 40%,#8e0c12 100%);border-radius:3px;overflow:hidden">
  <div class="a" style="left:0;top:33.5px;width:62px;height:23px;background:linear-gradient(90deg,#7a0a10,#9a1016 70%,rgba(160,20,25,0));border-top:1px solid #b86a3a"></div>
  <div class="a" style="left:11.5px;top:4.2px;width:38px;height:38px;border-radius:50%;background:radial-gradient(circle,#8e1016 0,#8e1016 10.5px,#d89a2a 11px,#f2c050 14px,#c8861e 16.5px,#f0b840 18px,#a86a10 19px,rgba(0,0,0,0) 19.2px);clip-path:inset(0 0 8.3px 0)"></div>
  <svg class="a" style="left:22px;top:11px" width="17" height="17" viewBox="0 0 17 17"><path d="M1.5 2 L8.5 15 L15.5 2 L12.5 2 L8.5 9.5 L4.5 2Z" fill="#f2be48"></path></svg>
  <div class="a" style="left:5.5px;top:39px;font-size:11.5px;font-weight:bold;color:#ece6e6;white-space:nowrap;letter-spacing:0.2px">Vgaming</div>
  <div class="a" style="left:56px;top:6px;width:19px;height:27px;background:#f4f2f2;border-radius:2px;transform:rotate(-22deg);box-shadow:0 0 1px #600"></div>
  <div class="a" style="left:61px;top:14px;width:4px;height:5px;background:#d82828;transform:rotate(45deg)"></div>
  <div class="a" style="left:53px;top:22px;width:17px;height:22px;background:#ede8e8;border-radius:2px;transform:rotate(-32deg);box-shadow:0 0 1px #600"></div>
  <div class="a" style="left:72px;top:-3px;width:19px;height:20px;background:#fafafa;border-radius:2px;transform:rotate(-3deg)"></div>
  <div class="a" style="left:80px;top:10px;width:6px;height:6px;border-radius:50%;background:#222"></div>
  <div class="a fit" style="left: 65.5px; top: 12.9px; font-size: 15px; font-weight: bold; font-style: italic; color: rgb(255, 213, 26); white-space: nowrap; --tw: 90px; -webkit-text-stroke: 0.8px rgb(255, 213, 26); text-shadow: rgb(154, 74, 0) 0px 1px 0px; letter-spacing: -0.521px;">CÔNG GAME</div>
  <div class="a fit" style="left: 64.5px; top: 29.6px; font-size: 15px; font-weight: bold; font-style: italic; color: rgb(255, 213, 26); white-space: nowrap; --tw: 92px; -webkit-text-stroke: 0.8px rgb(255, 213, 26); text-shadow: rgb(154, 74, 0) 0px 1px 0px; letter-spacing: 0.393px;">CHO NGƯỜI</div>
  <div class="a" style="left:102px;top:50px;width:14px;height:10px;border-radius:50%;background:#f6f2ee"></div>
  <div class="a" style="left:86px;top:53px;width:14px;height:8px;border-radius:50%;background:#f2c23a"></div>
  <div class="a" style="left:117px;top:52px;width:16px;height:10px;border-radius:50%;background:#f2c23a"></div>
  <div class="a" style="left:133px;top:48px;width:14px;height:12px;border-radius:3px;background:#e8e2da"></div>
  <div class="a" style="left:124px;top:-4px;width:14px;height:9px;border-radius:50%;background:#f090b0"></div>
  <div class="a" style="left:139px;top:-4px;width:12px;height:14px;border-radius:50%;background:#f8c830"></div>
</div>
<div class="a" style="left:1316.6px;top:269px;width:8.4px;height:8.4px;border-radius:50%;background:#2f7bc3"></div>
<div class="a" style="left:1333.5px;top:269px;width:8.4px;height:8.4px;border-radius:50%;background:#d9d9d9"></div>
<div class="a" style="left:1350.5px;top:269px;width:8.4px;height:8.4px;border-radius:50%;background:#d9d9d9"></div>

</body></html>
